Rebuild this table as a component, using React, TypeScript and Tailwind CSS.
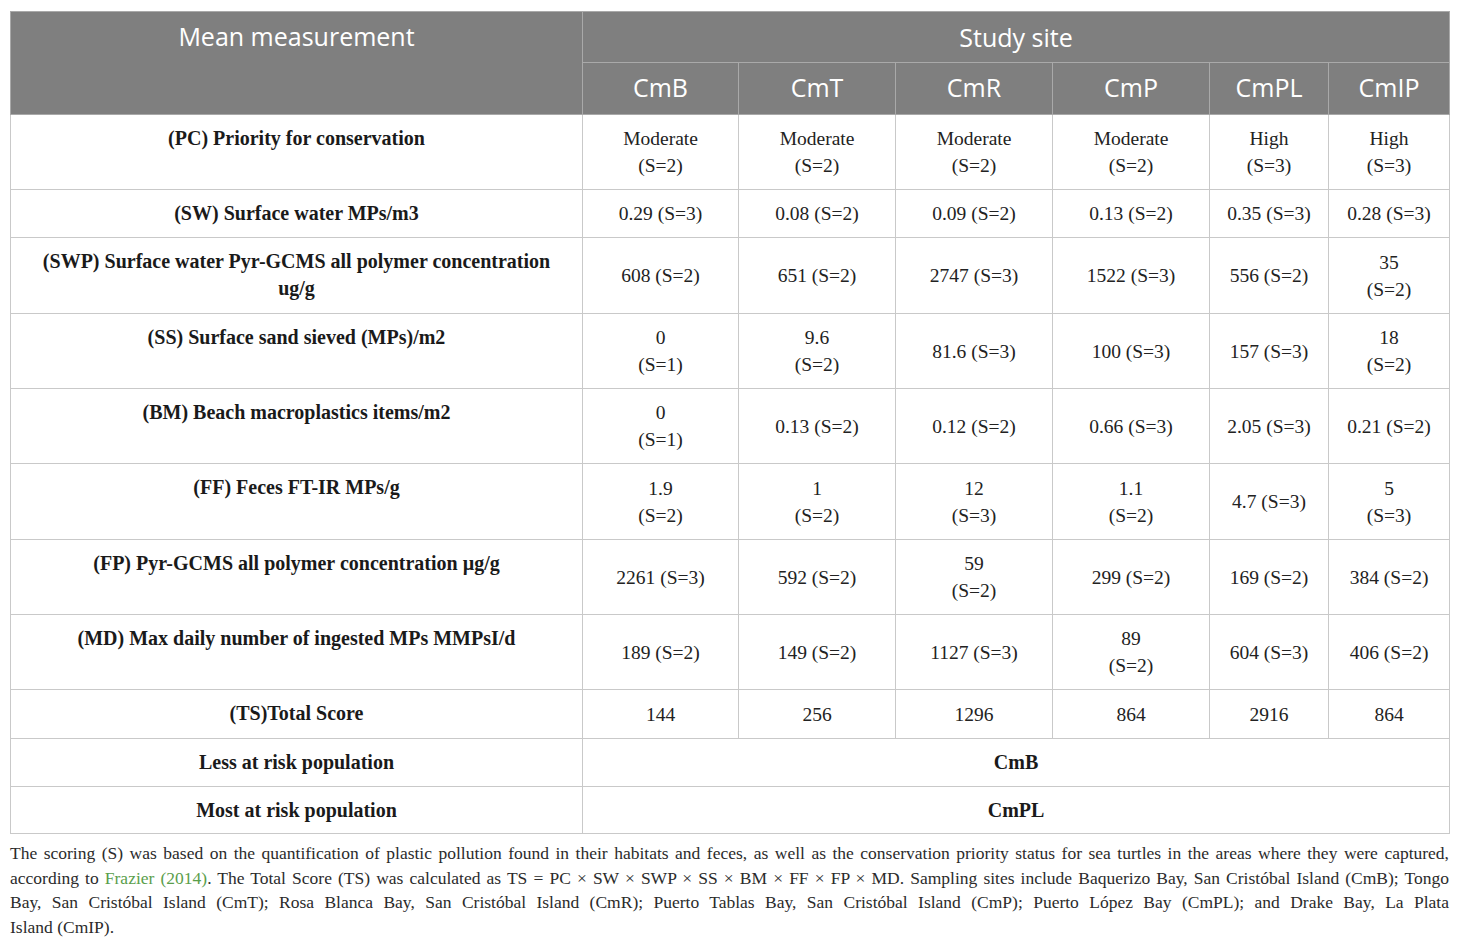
import React from "react";

type Row = {
  label: string[];
  cells: string[][];
  height: number;
};

const sites = ["CmB", "CmT", "CmR", "CmP", "CmPL", "CmIP"];

const rows: Row[] = [
  {
    label: ["(PC) Priority for conservation"],
    cells: [
      ["Moderate", "(S=2)"],
      ["Moderate", "(S=2)"],
      ["Moderate", "(S=2)"],
      ["Moderate", "(S=2)"],
      ["High", "(S=3)"],
      ["High", "(S=3)"],
    ],
    height: 75,
  },
  {
    label: ["(SW) Surface water MPs/m3"],
    cells: [["0.29 (S=3)"], ["0.08 (S=2)"], ["0.09 (S=2)"], ["0.13 (S=2)"], ["0.35 (S=3)"], ["0.28 (S=3)"]],
    height: 48,
  },
  {
    label: ["(SWP) Surface water Pyr-GCMS all polymer concentration", "ug/g"],
    cells: [["608 (S=2)"], ["651 (S=2)"], ["2747 (S=3)"], ["1522 (S=3)"], ["556 (S=2)"], ["35", "(S=2)"]],
    height: 76,
  },
  {
    label: ["(SS) Surface sand sieved (MPs)/m2"],
    cells: [["0", "(S=1)"], ["9.6", "(S=2)"], ["81.6 (S=3)"], ["100 (S=3)"], ["157 (S=3)"], ["18", "(S=2)"]],
    height: 75,
  },
  {
    label: ["(BM) Beach macroplastics items/m2"],
    cells: [["0", "(S=1)"], ["0.13 (S=2)"], ["0.12 (S=2)"], ["0.66 (S=3)"], ["2.05 (S=3)"], ["0.21 (S=2)"]],
    height: 75,
  },
  {
    label: ["(FF) Feces FT-IR MPs/g"],
    cells: [["1.9", "(S=2)"], ["1", "(S=2)"], ["12", "(S=3)"], ["1.1", "(S=2)"], ["4.7 (S=3)"], ["5", "(S=3)"]],
    height: 76,
  },
  {
    label: ["(FP) Pyr-GCMS all polymer concentration \u00b5g/g"],
    cells: [["2261 (S=3)"], ["592 (S=2)"], ["59", "(S=2)"], ["299 (S=2)"], ["169 (S=2)"], ["384 (S=2)"]],
    height: 75,
  },
  {
    label: ["(MD) Max daily number of ingested MPs MMPsI/d"],
    cells: [["189 (S=2)"], ["149 (S=2)"], ["1127 (S=3)"], ["89", "(S=2)"], ["604 (S=3)"], ["406 (S=2)"]],
    height: 75,
  },
  {
    label: ["(TS)Total Score"],
    cells: [["144"], ["256"], ["1296"], ["864"], ["2916"], ["864"]],
    height: 49,
  },
];

const serif = "font-['Liberation_Serif','Times_New_Roman',serif]";
const sans = "font-['Open_Sans','Noto_Sans',sans-serif]";

const Lines = ({ lines }: { lines: string[] }) => (
  <>
    {lines.map((l, i) => (
      <span key={i} className="block">
        {l}
      </span>
    ))}
  </>
);

// footnote lines broken where the reference breaks them
const FootLine = ({ children, last }: { children: React.ReactNode; last?: boolean }) => (
  <span className={last ? "block text-left" : "block text-justify [text-align-last:justify]"}>{children}</span>
);

const App = () => {
  return (
    <div className="w-[1460px] h-[946px] bg-white pt-[11px] px-[10px]">
      <table className={`w-[1439px] table-fixed border-collapse ${serif} text-[19.5px] leading-[27px] text-[#222]`}>
        <colgroup>
          <col className="w-[572px]" />
          <col className="w-[156px]" />
          <col className="w-[157px]" />
          <col className="w-[157px]" />
          <col className="w-[157px]" />
          <col className="w-[119px]" />
          <col className="w-[121px]" />
        </colgroup>
        <thead className={`${sans} text-white text-[25px] font-normal`}>
          <tr className="h-[51px] bg-[#7f7f7f]">
            <th rowSpan={2} className="border border-[#a9a9a9] font-normal align-top pt-[7px] leading-[34px]">
              Mean measurement
            </th>
            <th colSpan={6} className="border border-[#a9a9a9] font-normal leading-[34px] pb-[1px]">
              Study site
            </th>
          </tr>
          <tr className="h-[52px] bg-[#7f7f7f]">
            {sites.map((s) => (
              <th key={s} className="border border-[#a9a9a9] font-normal leading-[34px] pb-[4px]">
                {s}
              </th>
            ))}
          </tr>
        </thead>
        <tbody>
          {rows.map((r, i) => (
            <tr key={i} style={{ height: r.height }}>
              <td className="border border-[#c9c9c9] align-top text-center font-bold text-[20px] text-[#1a1a1a] pt-[10px] px-3">
                <Lines lines={r.label} />
              </td>
              {r.cells.map((c, j) => (
                <td key={j} className="border border-[#c9c9c9] align-middle text-center px-1">
                  <Lines lines={c} />
                </td>
              ))}
            </tr>
          ))}
          <tr className="h-[48px]">
            <td className="border border-[#c9c9c9] text-center font-bold text-[20px] text-[#1a1a1a]">
              Less at risk population
            </td>
            <td colSpan={6} className="border border-[#c9c9c9] text-center font-bold text-[20px] text-[#1a1a1a]">
              CmB
            </td>
          </tr>
          <tr className="h-[47px]">
            <td className="border border-[#c9c9c9] text-center font-bold text-[20px] text-[#1a1a1a]">
              Most at risk population
            </td>
            <td colSpan={6} className="border border-[#c9c9c9] text-center font-bold text-[20px] text-[#1a1a1a]">
              CmPL
            </td>
          </tr>
        </tbody>
      </table>
      <p className={`${serif} mt-[7px] w-[1439px] text-[17.5px] leading-[24.5px] text-[#2b2b2b]`}>
        <FootLine>
          The scoring (S) was based on the quantification of plastic pollution found in their habitats and feces, as
          well as the conservation priority status for sea turtles in the areas where they were captured,
        </FootLine>
        <FootLine>
          according to <span className="text-[#5a9e4b]">Frazier (2014)</span>. The Total Score (TS) was calculated as
          TS = PC × SW × SWP × SS × BM × FF × FP × MD. Sampling sites include Baquerizo Bay, San Cristóbal Island
          (CmB); Tongo
        </FootLine>
        <FootLine>
          Bay, San Cristóbal Island (CmT); Rosa Blanca Bay, San Cristóbal Island (CmR); Puerto Tablas Bay, San
          Cristóbal Island (CmP); Puerto López Bay (CmPL); and Drake Bay, La Plata
        </FootLine>
        <FootLine last>Island (CmIP).</FootLine>
      </p>
    </div>
  );
};

export default App;
